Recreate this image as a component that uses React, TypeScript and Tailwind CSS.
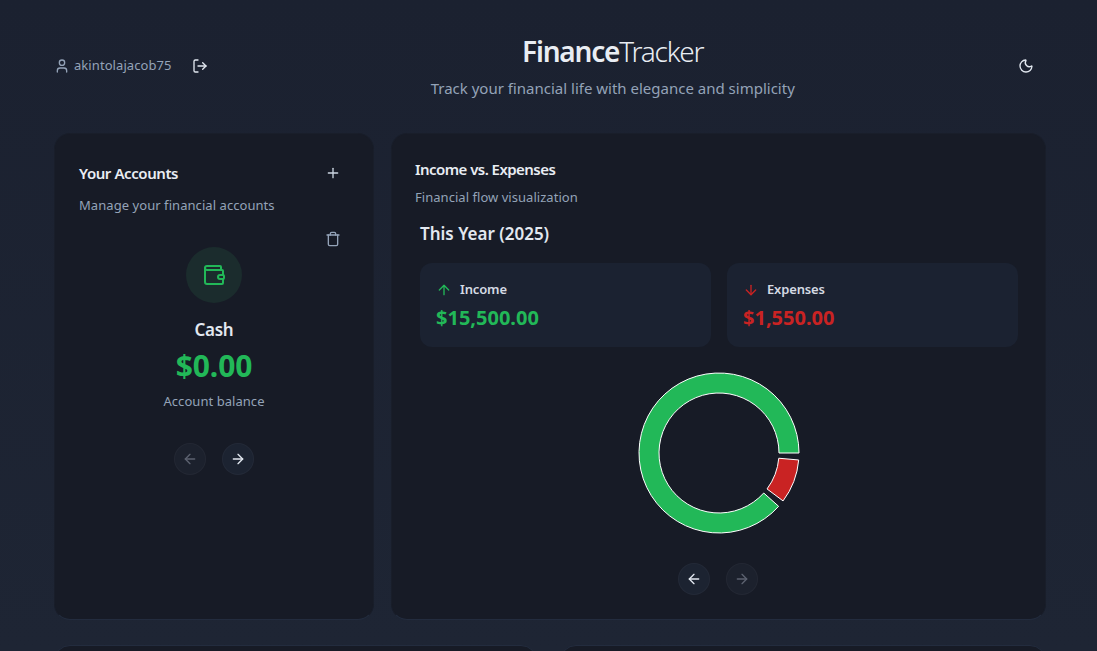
import { ArrowDown, ArrowLeft, ArrowRight, ArrowUp, LogOut, Moon, Plus, Trash, User, Wallet } from "lucide-react";
import clsx from "clsx";

// donut geometry, same numbers as the chart in the picture
const CX = 81;
const CY = 81;
const R_OUT = 80;
const R_IN = 60;

function arcPath(startDeg: number, endDeg: number) {
    const pt = (r: number, deg: number) => {
        const a = (deg * Math.PI) / 180;
        return `${(CX + r * Math.cos(a)).toFixed(2)} ${(CY - r * Math.sin(a)).toFixed(2)}`;
    };
    const large = endDeg - startDeg > 180 ? 1 : 0;
    return `M${pt(R_OUT, startDeg)} A${R_OUT} ${R_OUT} 0 ${large} 0 ${pt(R_OUT, endDeg)} L${pt(R_IN, endDeg)} A${R_IN} ${R_IN} 0 ${large} 1 ${pt(R_IN, startDeg)} Z`;
}

function Donut() {
    return (
        <svg width="162" height="162" viewBox="0 0 162 162">
            <path d={arcPath(0, 318.2)} fill="#22b858" stroke="#fff" strokeWidth="1" />
            <path d={arcPath(323.2, 355)} fill="#c92323" stroke="#fff" strokeWidth="1" />
        </svg>
    );
}

function NavButton({ dir, disabled }: { dir: "left" | "right"; disabled?: boolean }) {
    const Icon = dir === "left" ? ArrowLeft : ArrowRight;
    return (
        <button
            className={clsx(
                "w-8 h-8 rounded-full flex items-center justify-center border border-white/[0.03]",
                disabled ? "bg-[#1c212d] text-[#5c6270]" : "bg-[#1c2331] text-[#e2e8f0]"
            )}
        >
            <Icon className="w-4 h-4" />
        </button>
    );
}

function StatCard({ label, value, up }: { label: string; value: string; up?: boolean }) {
    const Icon = up ? ArrowUp : ArrowDown;
    return (
        <div className="flex-1 h-[84px] rounded-xl bg-[#1b2231] px-4 pt-[17px]">
            <div className="flex items-center gap-2 h-[20px]">
                <Icon className={clsx("w-4 h-4", up ? "text-[#22b858]" : "text-[#c92323]")} />
                <span className="text-[13px] font-semibold tracking-[-0.15px] text-[#d5dae3]">{label}</span>
            </div>
            <div className={clsx("mt-[4px] text-[20px] leading-[28px] font-bold", up ? "text-[#22b858]" : "text-[#c92323]")}>
                {value}
            </div>
        </div>
    );
}

export default function App() {
    return (
        <div className="h-screen overflow-hidden bg-gradient-to-b from-[#1b2130] to-[#1e2534] pl-[54px] pr-[51px] font-['Noto_Sans',sans-serif]">
            <header className="h-[133px] flex items-center justify-between pb-[2px]">
                <div className="flex items-center">
                    <User className="w-4 h-4 text-[#94a3b8] mr-[4px]" />
                    <span className="text-[13px] tracking-[0.07px] text-[#94a3b8]">akintolajacob75</span>
                    <LogOut className="w-4 h-4 text-[#e2e8f0] ml-[20px]" />
                </div>
                <div className="text-center">
                    <h1 className="mt-[1px] text-[28px] leading-[36px] tracking-[-1.2px] text-[#e9edf3]">
                        <span className="font-semibold">Finance</span>
                        <span className="font-light">Tracker</span>
                    </h1>
                    <p className="mt-[7px] text-[15px] leading-[24px] text-[#94a3b8]">
                        Track your financial life with elegance and simplicity
                    </p>
                </div>
                <div className="flex justify-end pr-[12px]">
                    <Moon className="w-4 h-4 text-[#e2e8f0]" />
                </div>
            </header>

            <main className="flex gap-[17px] h-[487px]">
                <section className="w-[320px] shrink-0 rounded-2xl bg-[#171b26] border border-[#191e2a] border-b-[#232c3e] pt-[29px] px-6 flex flex-col">
                    <div className="flex items-center justify-between h-[20px] pr-[8px]">
                        <h2 className="text-[15px] font-semibold tracking-[-0.42px] text-[#e9edf3]">Your Accounts</h2>
                        <Plus className="w-4 h-4 text-[#cbd5e1]" />
                    </div>
                    <p className="mt-[12px] text-[13px] leading-[20px] tracking-[0.06px] text-[#94a3b8]">Manage your financial accounts</p>
                    <div className="flex justify-end pr-[8px] mt-[16px]">
                        <Trash className="w-4 h-4 text-[#94a3b8]" />
                    </div>
                    <div className="flex flex-col items-center">
                        <div className="w-[56px] h-[56px] rounded-full bg-[#1b2c2d] flex items-center justify-center">
                            <Wallet className="w-6 h-6 text-[#22b858]" />
                        </div>
                        <div className="mt-[14px] text-[17px] leading-[26px] font-semibold tracking-[-0.3px] text-[#e2e8f0]">Cash</div>
                        <div className="mt-[5px] text-[30px] leading-[36px] font-bold tracking-[-0.1px] text-[#22b858]">$0.00</div>
                        <div className="mt-[7px] text-[13px] leading-[20px] tracking-[0.05px] text-[#94a3b8]">Account balance</div>
                        <div className="flex gap-[16px] mt-[32px]">
                            <NavButton dir="left" disabled />
                            <NavButton dir="right" />
                        </div>
                    </div>
                </section>

                <section className="flex-1 min-w-0 rounded-2xl bg-[#171b26] border border-[#191e2a] border-b-[#232c3e] pt-[25px] px-[23px]">
                    <h2 className="text-[15px] leading-[20px] font-semibold tracking-[-0.55px] text-[#e9edf3]">Income vs. Expenses</h2>
                    <p className="mt-[8px] text-[13px] leading-[20px] tracking-[0.04px] text-[#94a3b8]">Financial flow visualization</p>
                    <div className="pl-[5px] w-[603px]">
                        <h3 className="mt-[13px] text-[17px] leading-[28px] font-semibold text-[#e2e8f0]">This Year (2025)</h3>
                        <div className="flex gap-4 mt-[15px]">
                            <StatCard label="Income" value="$15,500.00" up />
                            <StatCard label="Expenses" value="$1,550.00" />
                        </div>
                        <div className="flex justify-center mt-[25px]">
                            <Donut />
                        </div>
                        <div className="flex justify-center gap-[16px] mt-[29px] pr-[2px]">
                            <NavButton dir="left" />
                            <NavButton dir="right" disabled />
                        </div>
                    </div>
                </section>
            </main>

            <div className="flex gap-[23px] mt-[25px]">
                <div className="w-[483px] h-[200px] rounded-2xl bg-[#171b26] border border-[#232c3e]" />
                <div className="flex-1 h-[200px] rounded-2xl bg-[#171b26] border border-[#232c3e]" />
            </div>
        </div>
    );
}
